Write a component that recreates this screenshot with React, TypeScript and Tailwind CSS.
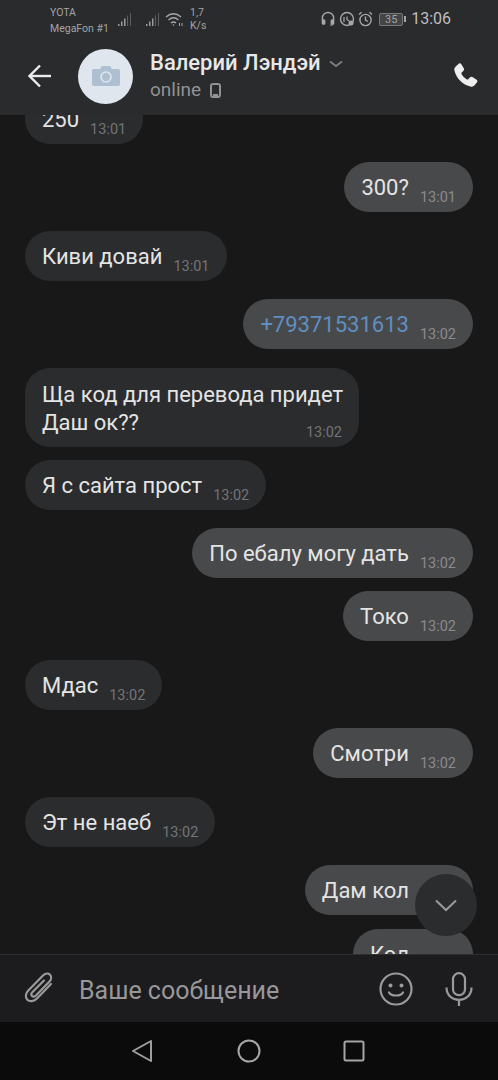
const FONT = "font-['Roboto','Liberation_Sans',sans-serif]";

type Msg = {
  out?: boolean;
  text: string;
  time: string;
  gap: string;
  link?: boolean;
};

const MESSAGES: Msg[] = [
  { text: "250", time: "13:01", gap: "-mt-[21px]" },
  { out: true, text: "300?", time: "13:01", gap: "mt-[18px]" },
  { text: "Киви довай", time: "13:01", gap: "mt-[19px]" },
  { out: true, text: "+79371531613", time: "13:02", gap: "mt-[18px]", link: true },
];

const MESSAGES_2: Msg[] = [
  { text: "Я с сайта прост", time: "13:02", gap: "mt-[13px]" },
  { out: true, text: "По ебалу могу дать", time: "13:02", gap: "mt-[18px]" },
  { out: true, text: "Токо", time: "13:02", gap: "mt-[13px]" },
  { text: "Мдас", time: "13:02", gap: "mt-[19px]" },
  { out: true, text: "Смотри", time: "13:02", gap: "mt-[18px]" },
  { text: "Эт не наеб", time: "13:02", gap: "mt-[19px]" },
  { out: true, text: "Дам кол", time: "13:02", gap: "mt-[18px]" },
  { out: true, text: "Кол", time: "13:02", gap: "mt-[14px]" },
];

function Bubble({ m }: { m: Msg }) {
  return (
    <div className={`${m.gap} flex ${m.out ? "justify-end" : "justify-start"} shrink-0`}>
      <div
        className={`h-[50px] rounded-[25px] pl-[17px] pr-[17px] flex ${m.out ? "bg-[#48494b]" : "bg-[#2b2c2e]"}`}
      >
        <span
          className={`pt-[12px] text-[22px] leading-[27px] ${m.link ? "text-[#5f8fc2]" : "text-[#e4e4e4]"}`}
        >
          {m.text}
        </span>
        <span className={`ml-[11px] pt-[27px] text-[14.5px] leading-[18px] ${m.out ? "text-[#8a8b8d]" : "text-[#737476]"}`}>
          {m.time}
        </span>
      </div>
    </div>
  );
}

function Signal() {
  return (
    <svg width="16" height="16" viewBox="0 0 16 16" fill="#9a9a9b">
      <rect x="1" y="12" width="1.5" height="2" />
      <rect x="4" y="9.5" width="1.5" height="4.5" />
      <rect x="7" y="6.5" width="1.5" height="7.5" />
      <rect x="10" y="3.5" width="1" height="10.5" opacity="0.45" />
      <rect x="13" y="1" width="1" height="13" opacity="0.45" />
    </svg>
  );
}

function StatusBar() {
  return (
    <div className="h-[36px] flex items-start text-[#a3a3a4]">
      <div className="w-[67px] ml-[50px] pt-[5px] text-[10.5px] leading-[16px] whitespace-nowrap">
        <div>YOTA</div>
        <div>MegaFon #1</div>
      </div>
      <div className="mt-[12px] flex">
        <Signal />
        <div className="w-[12px]" />
        <Signal />
      </div>
      <svg className="mt-[12px] ml-[4px]" width="19" height="15" viewBox="0 0 19 15" fill="none" stroke="#a8a8a9" strokeWidth="1.4">
        <path d="M1 5 Q8.5 -1.5 16 5" />
        <path d="M3.5 8 Q8.5 3.5 13.5 8" />
        <path d="M6 11 Q8.5 8.8 11 11" />
        <circle cx="8.5" cy="13" r="0.8" fill="#a8a8a9" stroke="none" />
        <path d="M14.5 11v3M17 11v3" strokeWidth="1" />
      </svg>
      <div className="ml-[6px] pt-[6px] text-[10.5px] leading-[13px]">
        <div>1,7</div>
        <div>K/s</div>
      </div>
      <div className="ml-auto mr-[47px] flex items-center mt-[10px] h-[18px]">
        <svg width="14" height="16" viewBox="0 0 15 16" fill="none" stroke="#a8a8a9" strokeWidth="1.5">
          <path d="M1.5 10V7a6 6 0 0 1 12 0v3" />
          <rect x="1.5" y="9" width="2.5" height="4.5" rx="1" fill="#a8a8a9" />
          <rect x="11" y="9" width="2.5" height="4.5" rx="1" fill="#a8a8a9" />
          <path d="M12.5 13.5v1h-3" strokeWidth="1" />
        </svg>
        <svg className="ml-[4px]" width="16" height="16" viewBox="0 0 16 16" fill="none" stroke="#a8a8a9" strokeWidth="1.4">
          <circle cx="8" cy="8" r="6.5" />
          <path d="M5 6v5M8 5.5v3l2 1.5" strokeWidth="1.2" />
          <circle cx="12" cy="12" r="2.5" fill="#a8a8a9" stroke="none" />
        </svg>
        <svg className="ml-[3px]" width="15" height="16" viewBox="0 0 15 16" fill="none" stroke="#a8a8a9" strokeWidth="1.4">
          <circle cx="7.5" cy="9" r="5.6" />
          <path d="M7.5 5.5V9l2.4 1.5" />
          <path d="M1 3.5 3.5 1.2M14 3.5 11.5 1.2" />
        </svg>
        <div className="ml-[6px] flex items-center">
          <div className="w-[24px] h-[13px] border border-[#77787a] rounded-[2px] bg-[#444547] text-[11px] leading-[11px] text-center text-[#a3a3a4]">
            35
          </div>
          <div className="w-[2px] h-[6px] bg-[#a3a3a4] ml-[1px]" />
        </div>
        <div className="ml-[5px] text-[16px] leading-[18px] text-[#bdbdbe]">13:06</div>
      </div>
    </div>
  );
}

function Header() {
  return (
    <div className="h-[115px] bg-[#2a2b2d] shrink-0">
      <StatusBar />
      <div className="h-[79px] flex items-start">
        <svg className="ml-[27px] mt-[27px]" width="25" height="26" viewBox="0 0 25 26" fill="none" stroke="#ececec" strokeWidth="2.4">
          <path d="M24 13H3" />
          <path d="M13 2.5 2.5 13 13 23.5" />
        </svg>
        <div className="ml-[26px] mt-[12.5px] w-[55px] h-[55px] rounded-full bg-[#dfe6ee] flex items-center justify-center">
          <svg width="28" height="22" viewBox="0 0 28 22">
            <path d="M2 4h6l2-3h8l2 3h6a2 2 0 0 1 2 2v13a2 2 0 0 1-2 2H2a2 2 0 0 1-2-2V6a2 2 0 0 1 2-2z" fill="#aebfd1" />
            <circle cx="14" cy="12" r="5" fill="none" stroke="#dfe6ee" strokeWidth="1.6" />
          </svg>
        </div>
        <div className="ml-[17px] mt-[14px]">
          <div className="flex items-center">
            <span className="text-[22px] leading-[26px] font-medium text-[#e8e8e9]">Валерий Лэндэй</span>
            <svg className="ml-[8px] mt-[1px]" width="14" height="8" viewBox="0 0 14 8" fill="none" stroke="#7a7b7d" strokeWidth="2">
              <path d="M1 1.5 7 6l6-4.5" />
            </svg>
          </div>
          <div className="flex items-center mt-[2px]">
            <span className="text-[19px] leading-[24px] text-[#919293]">online</span>
            <svg className="ml-[9px]" width="11" height="15" viewBox="0 0 11 15" fill="none" stroke="#919293" strokeWidth="2">
              <rect x="1" y="1" width="9" height="13" rx="2" />
              <path d="M3 12h5" />
            </svg>
          </div>
        </div>
        <svg className="ml-auto mr-[19px] mt-[27px]" width="26" height="26" viewBox="2 1 21 21" fill="#eeeeee">
          <path d="M6.6 1.600c.6-.5 1.500-.4 2 .3l2.100 3.400c.4.6.3 1.400-.2 1.900L9 8.700c-.3.3-.3.7-.2 1 .9 1.900 2.600 3.600 4.500 4.600.4.200.8.100 1-.2l1.500-1.500c.5-.5 1.300-.6 1.900-.2l3.400 2.100c.7.500.8 1.400.3 2l-1.800 2.300c-.9 1.100-2.300 1.600-3.600 1.200C9.200 18.200 4.800 13.400 3.200 7.300 2.800 6 3.300 4.500 4.400 3.600z" />
        </svg>
      </div>
    </div>
  );
}

function Composer() {
  return (
    <div className="h-[68px] shrink-0 bg-[#1c1c1e] border-t border-[#2e2e30] flex items-start">
      <svg className="ml-[24px] mt-[17px]" width="31" height="33" viewBox="0 0 31 33" fill="none" stroke="#9a9a9b" strokeWidth="2.2" strokeLinecap="round">
        <path d="M27 12 13 26.500c-3 3-7.500 3.500-9.700 1.200-2.300-2.300-1.800-6.500 1.200-9.500L19 3.500c2.200-2.200 5.300-2.500 7-.8 1.800 1.800 1.400 4.800-.8 7L12 23.500c-1.200 1.200-3 1.500-4 .5s-.7-2.800.5-4L20 8.500" />
      </svg>
      <div className="ml-[24px] mt-[21px] text-[25px] leading-[30px] text-[#98989a]">Ваше сообщение</div>
      <svg className="ml-auto mt-[17px]" width="34" height="34" viewBox="0 0 34 34" fill="none" stroke="#9a9a9b" strokeWidth="2.2">
        <circle cx="17" cy="17" r="15.500" />
        <circle cx="11.500" cy="13.500" r="2" fill="#9a9a9b" stroke="none" />
        <circle cx="22.500" cy="13.500" r="2" fill="#9a9a9b" stroke="none" />
        <path d="M10 20.500c2 4 12 4 14 0" strokeLinecap="round" />
      </svg>
      <svg className="ml-[32px] mr-[25px] mt-[17px]" width="28" height="34" viewBox="0 0 28 34" fill="none" stroke="#9a9a9b" strokeWidth="2.2">
        <rect x="8" y="1.200" width="12" height="22" rx="6" />
        <path d="M1.500 15.500c0 16.500 25 16.500 25 0M14 27v7" />
      </svg>
    </div>
  );
}

function NavBar() {
  return (
    <div className="h-[58px] shrink-0 bg-[#0b0b0b] flex items-center justify-center">
      <svg className="mr-[84px] -ml-[4px]" width="22" height="24" viewBox="0 0 22 24" fill="none" stroke="#9f9f9f" strokeWidth="2" strokeLinejoin="round">
        <path d="M20 2 2 12l18 10z" />
      </svg>
      <svg className="mr-[82px]" width="24" height="24" viewBox="0 0 24 24" fill="none" stroke="#a6a6a6" strokeWidth="2">
        <circle cx="12" cy="12" r="10.500" />
      </svg>
      <svg className="mr-[-1px]" width="22" height="22" viewBox="0 0 22 22" fill="none" stroke="#a6a6a6" strokeWidth="2">
        <rect x="1.500" y="1.500" width="19" height="19" rx="1.500" />
      </svg>
    </div>
  );
}

export default function App() {
  return (
    <div className={`${FONT} relative w-[498px] h-[1080px] overflow-hidden bg-[#181819] flex flex-col`}>
      <Header />
      <div className="flex-1 min-h-0 overflow-hidden px-[25px] flex flex-col">
        {MESSAGES.map((m, i) => (
          <Bubble key={i} m={m} />
        ))}
        <div className="mt-[19px] flex justify-start shrink-0">
          <div className="h-[79px] w-[334px] rounded-[25px] bg-[#2b2c2e] pl-[17px] pt-[13px] relative">
            <div className="text-[22px] leading-[28px] text-[#e4e4e4] whitespace-nowrap">Ща код для перевода придет</div>
            <div className="text-[22px] leading-[28px] text-[#e4e4e4]">Даш ок??</div>
            <span className="absolute right-[17px] bottom-[5px] text-[14.5px] leading-[18px] text-[#737476]">13:02</span>
          </div>
        </div>
        {MESSAGES_2.map((m, i) => (
          <Bubble key={i} m={m} />
        ))}
      </div>
      <div className="absolute left-[415px] top-[874px] w-[62px] h-[62px] rounded-full bg-[#2b2c2e] flex items-center justify-center">
        <svg width="22" height="13" viewBox="0 0 22 13" fill="none" stroke="#9a9a9b" strokeWidth="2">
          <path d="M1 1.500 11 11 21 1.500" />
        </svg>
      </div>
      <Composer />
      <NavBar />
    </div>
  );
}
